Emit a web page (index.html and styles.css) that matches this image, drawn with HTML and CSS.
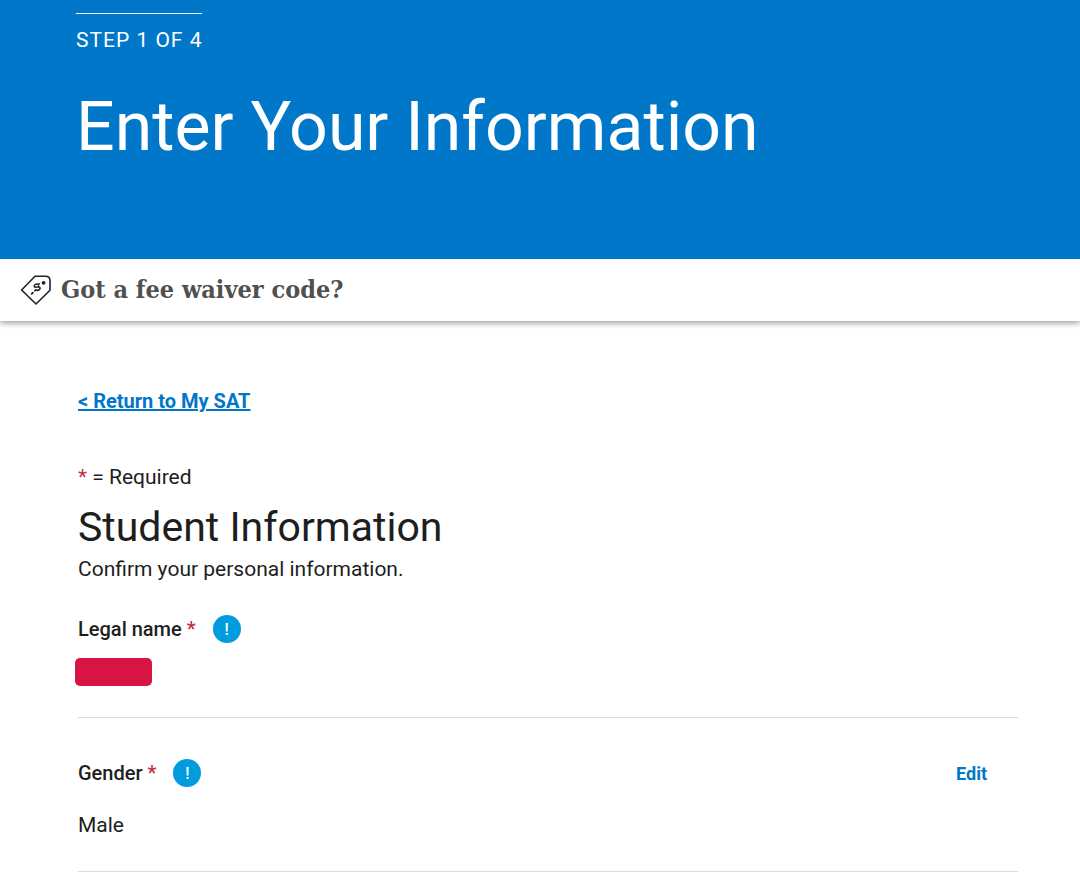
FILE: index.html
```html
<!DOCTYPE html>
<html lang="en">
<head>
    <meta charset="UTF-8">
    <meta name="viewport" content="width=device-width, initial-scale=1.0">
    <title>Enter Your Information</title>
    <link rel="stylesheet" href="styles.css">
</head>
<body>

<header class="banner">
    <p class="step">STEP 1 OF 4</p>
    <h1>Enter Your Information</h1>
</header>

<div class="fee-waiver">
    <button type="button" class="fee-waiver-button">
        <svg class="tag-icon" viewBox="0 0 32 32" aria-hidden="true">
            <path d="M15 2.2 H25.5 Q30 2.2 30 6.7 V16.2 L16 30 L1.6 16 Z" fill="none" stroke="#222" stroke-width="1.6" stroke-linejoin="round"/>
            <circle cx="23.6" cy="8.8" r="1.9" fill="#222"/>
            <g fill="none" stroke="#222" stroke-width="1.6" stroke-linecap="round">
                <path d="M18.4 10.6 C16.6 9.2 13.6 10.8 14.4 12.7 C15.2 14.3 18.4 11.8 19.8 13.4 C20.9 15.2 18.2 17.3 15.7 15.9"/>
                <path d="M18.5 10.6 L19.2 9.8 M15.6 16 L14.8 16.8"/>
            </g>
            <path d="M12.8 18.7 L11.7 19.8" fill="none" stroke="#222" stroke-width="1.9" stroke-linecap="round"/>
        </svg>
        <span>Got a fee waiver code?</span>
    </button>
</div>

<main class="content">
    <a class="return-link" href="#">&lt; Return to My SAT</a>
    <p class="required-note"><span class="star">*</span> = Required</p>

    <h2>Student Information</h2>
    <p>Confirm your personal information.</p>

    <section class="field">
        <div class="field-header">
            <h3>Legal name<span class="star">*</span></h3>
            <button type="button" class="info-button" aria-label="About legal name">!</button>
        </div>
        <div class="redacted"></div>
    </section>

    <section class="field">
        <div class="field-header">
            <h3>Gender<span class="star">*</span></h3>
            <button type="button" class="info-button" aria-label="About gender">!</button>
            <button type="button" class="edit-button">Edit</button>
        </div>
        <p class="field-value">Male</p>
    </section>
</main>

</body>
</html>
```

FILE: styles.css
```css
body {
    margin: 0;
    font-family: Roboto, Arial, sans-serif;
    font-size: 20px;
    line-height: 28px;
    color: #1e1e1e;
    background: white;
}
h1, h2, h3, p {
    margin: 0;
    font-weight: 400;
}
p {
    font-size: 21px;
}
button {
    padding: 0;
    border: none;
    background: none;
    font-family: inherit;
    cursor: pointer;
}
.banner {
    background: #0077c8;
    color: white;
    padding: 13px 76px 90px;
}
.step {
    display: inline-block;
    border-top: 1px solid white;
    padding-top: 12px;
    letter-spacing: 1px;
}
h1 {
    font-size: 68px;
    line-height: 84px;
    margin-top: 31px;
}
.fee-waiver {
    padding: 12px 20px;
    box-shadow: 0 2px 6px rgba(0, 0, 0, 0.4);
    clip-path: inset(0 0 -12px 0);
}
.fee-waiver-button {
    display: flex;
    align-items: center;
    gap: 9px;
    font-family: "Roboto Slab", "DejaVu Serif Condensed", serif;
    font-size: 25px;
    line-height: 38px;
    font-weight: 700;
    color: #505050;
}
.tag-icon {
    width: 32px;
    height: 32px;
}
.content {
    padding: 66px 62px 0 78px;
}
.return-link {
    color: #0077c8;
    font-weight: 700;
}
.required-note {
    margin-top: 48px;
}
.star {
    color: #c13145;
}
h2 {
    font-size: 41px;
    line-height: 48px;
    margin: 12px 0 4px;
}
.field {
    padding: 32px 0 31px;
    border-bottom: 1px solid #dcdcdc;
}
.field + .field {
    padding: 41px 0 32px;
}
.field-header {
    display: flex;
    align-items: center;
}
h3 {
    font-size: 20px;
    font-weight: 500;
}
h3 .star {
    margin-left: 5px;
}
.info-button {
    width: 28px;
    height: 28px;
    margin-left: 17px;
    border-radius: 50%;
    background: #009cde;
    color: white;
    font-size: 16px;
    font-weight: 500;
}
.edit-button {
    margin-left: auto;
    margin-right: 31px;
    color: #0077c8;
    font-size: 18px;
    font-weight: 700;
}
.redacted {
    width: 77px;
    height: 28px;
    margin: 15px 0 0 -3px;
    border-radius: 5px;
    background: #d81442;
}
.field-value {
    margin-top: 24px;
}
```
